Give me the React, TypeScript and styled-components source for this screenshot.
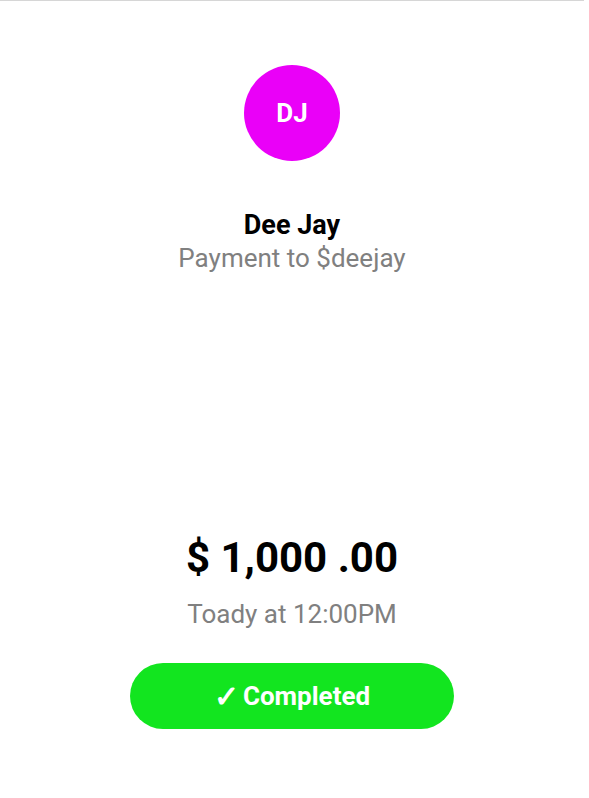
import React from "react";
import styled, { createGlobalStyle } from "styled-components";

const Global = createGlobalStyle`
  html, body { margin: 0; padding: 0; background: #ffffff; }
  body { font-family: Roboto, "Liberation Sans", sans-serif; }
`;

const Page = styled.div`
  width: 584px;
  height: 798px;
  box-sizing: border-box;
  border-top: 1px solid #d6d6d6;
  display: flex;
  flex-direction: column;
  align-items: center;
`;

const Avatar = styled.div`
  margin-top: 64px;
  width: 96px;
  height: 96px;
  border-radius: 50%;
  background: #ea00f8;
  color: #ffffff;
  font-size: 26px;
  font-weight: 700;
  display: flex;
  align-items: center;
  justify-content: center;
`;

const Name = styled.div`
  margin-top: 48px;
  font-size: 27px;
  font-weight: 700;
  line-height: 32px;
  color: #000000;
`;

const Sub = styled.div<{ $top?: number }>`
  margin-top: ${(p) => p.$top ?? 0}px;
  font-size: 26px;
  line-height: 34px;
  color: #808080;
`;

const Amount = styled.div`
  margin-top: 258px;
  font-size: 42px;
  font-weight: 700;
  line-height: 50px;
  color: #000000;
`;

const Status = styled.div`
  margin-top: 32px;
  width: 324px;
  height: 66px;
  border-radius: 33px;
  background: #12e51f;
  color: #ffffff;
  font-size: 26px;
  font-weight: 700;
  display: flex;
  align-items: center;
  justify-content: center;
  gap: 4px;
`;

const Check = styled.span`
  font-size: 30px;
`;

export default function App() {
  return (
    <>
      <Global />
      <Page>
        <Avatar>DJ</Avatar>
        <Name>Dee Jay</Name>
        <Sub>Payment to $deejay</Sub>
        <Amount>$ 1,000 .00</Amount>
        <Sub $top={14}>Toady at 12:00PM</Sub>
        <Status>
          <Check>✓</Check>Completed
        </Status>
      </Page>
    </>
  );
}
